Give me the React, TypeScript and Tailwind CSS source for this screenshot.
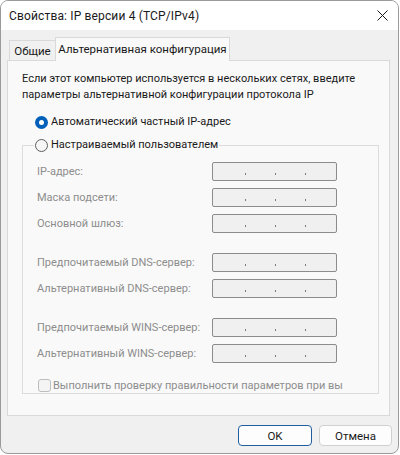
import React from "react";

function IpBox({ className = "" }: { className?: string }) {
  return (
    <div
      className={
        "w-[125px] h-[19px] border border-[#8c8c8c] rounded-[2px] bg-[#f0f0f0] flex items-start pt-[10px] pl-[32px] gap-[29px] shrink-0 " +
        className
      }
    >
      <span className="w-px h-[2px] bg-[#7a7a7a]" />
      <span className="w-px h-[2px] bg-[#7a7a7a]" />
      <span className="w-px h-[2px] bg-[#7a7a7a]" />
    </div>
  );
}

function Row({ label, className = "" }: { label: string; className?: string }) {
  return (
    <div className={"flex items-center h-[19px] " + className}>
      <div className="w-[189px] shrink-0 pl-[14px] text-[#8d8d8d] whitespace-nowrap leading-[16px]">{label}</div>
      <IpBox />
    </div>
  );
}

export default function App() {
  return (
    <div className="w-[400px] h-[455px] bg-white font-['Roboto',sans-serif] text-[11px] text-[#1a1a1a]">
      <div className="w-[399px] h-[454px] border border-[#9a9a9a] rounded-[8px] overflow-hidden flex flex-col bg-[#f0f0f0]">
        {/* Title bar */}
        <div className="h-[29px] bg-white flex items-center justify-between pl-[8px] pr-[9px] shrink-0">
          <span className="leading-[16px] whitespace-nowrap text-[12px] tracking-[0.15px]">Свойства: IP версии 4 (TCP/IPv4)</span>
          <svg width="11" height="11" viewBox="0 0 11 11" className="mr-[1px]">
            <path d="M0.5 0.5 L10.5 10.5 M10.5 0.5 L0.5 10.5" stroke="#1a1a1a" strokeWidth="1" fill="none" />
          </svg>
        </div>
        {/* Body */}
        <div className="flex-1 flex flex-col pl-[6px] pr-[8px] pt-[7px]">
          {/* Tabs */}
          <div className="flex items-end h-[24px] -mb-px relative z-10 pl-[2px] text-[11.5px]">
            <div className="h-[21px] w-[46px] border border-[#d9d9d9] border-r-0 bg-[#f0f0f0] flex items-center justify-center leading-[16px] whitespace-nowrap">
              Общие
            </div>
            <div className="h-[24px] w-[175px] border border-b-0 border-[#d9d9d9] bg-[#f9f9f9] flex items-start justify-center pt-[3px] leading-[16px] whitespace-nowrap">
              Альтернативная конфигурация
            </div>
          </div>
          {/* Panel */}
          <div className="w-[383px] h-[356px] border border-[#d9d9d9] bg-[#f9f9f9] flex flex-col">
            <div className="pt-[10px] pl-[14px] leading-[16px]">
              <div className="whitespace-nowrap">Если этот компьютер используется в нескольких сетях, введите</div>
              <div className="whitespace-nowrap">параметры альтернативной конфигурации протокола IP</div>
            </div>
            <div className="mt-[11px] pl-[27px] flex items-center h-[16px] leading-[16px]">
              <span className="w-[13px] h-[13px] rounded-full bg-[#005fb8] flex items-center justify-center">
                <span className="w-[5px] h-[5px] rounded-full bg-white" />
              </span>
              <span className="ml-[3px]">Автоматический частный IP-адрес</span>
            </div>
            <fieldset className="mt-[7px] ml-[14px] w-[357px] border border-[#dcdcdc] pb-[1px]">
              <legend className="ml-[11px] px-[1px] h-[16px] leading-[16px]">
                <span className="flex items-center h-[16px]">
                  <span className="w-[13px] h-[13px] rounded-full border border-[#5d5d5d] bg-[#f6f6f6]" />
                  <span className="ml-[3px]">Настраиваемый пользователем</span>
                </span>
              </legend>
              <Row label="IP-адрес:" className="mt-[9px]" />
              <Row label="Маска подсети:" className="mt-[7px]" />
              <Row label="Основной шлюз:" className="mt-[7px]" />
              <Row label="Предпочитаемый DNS-сервер:" className="mt-[20px]" />
              <Row label="Альтернативный DNS-сервер:" className="mt-[7px]" />
              <Row label="Предпочитаемый WINS-сервер:" className="mt-[20px]" />
              <Row label="Альтернативный WINS-сервер:" className="mt-[7px]" />
              <div className="mt-[16px] ml-[15px] flex items-center h-[13px]">
                <span className="w-[13px] h-[13px] rounded-[3px] border border-[#bdbdbd] bg-[#f4f4f4] shrink-0" />
                <span className="ml-[2px] w-[290px] overflow-hidden whitespace-nowrap text-[#8d8d8d] leading-[16px]">
                  Выполнить проверку правильности параметров при выходе
                </span>
              </div>
            </fieldset>
          </div>
          {/* Buttons */}
          <div className="flex justify-end mt-[9px] gap-[7px] text-[11.5px]">
            <button className="w-[74px] h-[21px] rounded-[4px] border border-[#1f5fa0] bg-[#fdfdfd] flex items-center justify-center leading-[16px]">
              OK
            </button>
            <button className="w-[73px] h-[21px] rounded-[4px] border border-[#d0d0d0] bg-[#fdfdfd] flex items-center justify-center leading-[16px] mr-[-2px]">
              Отмена
            </button>
          </div>
        </div>
      </div>
    </div>
  );
}
